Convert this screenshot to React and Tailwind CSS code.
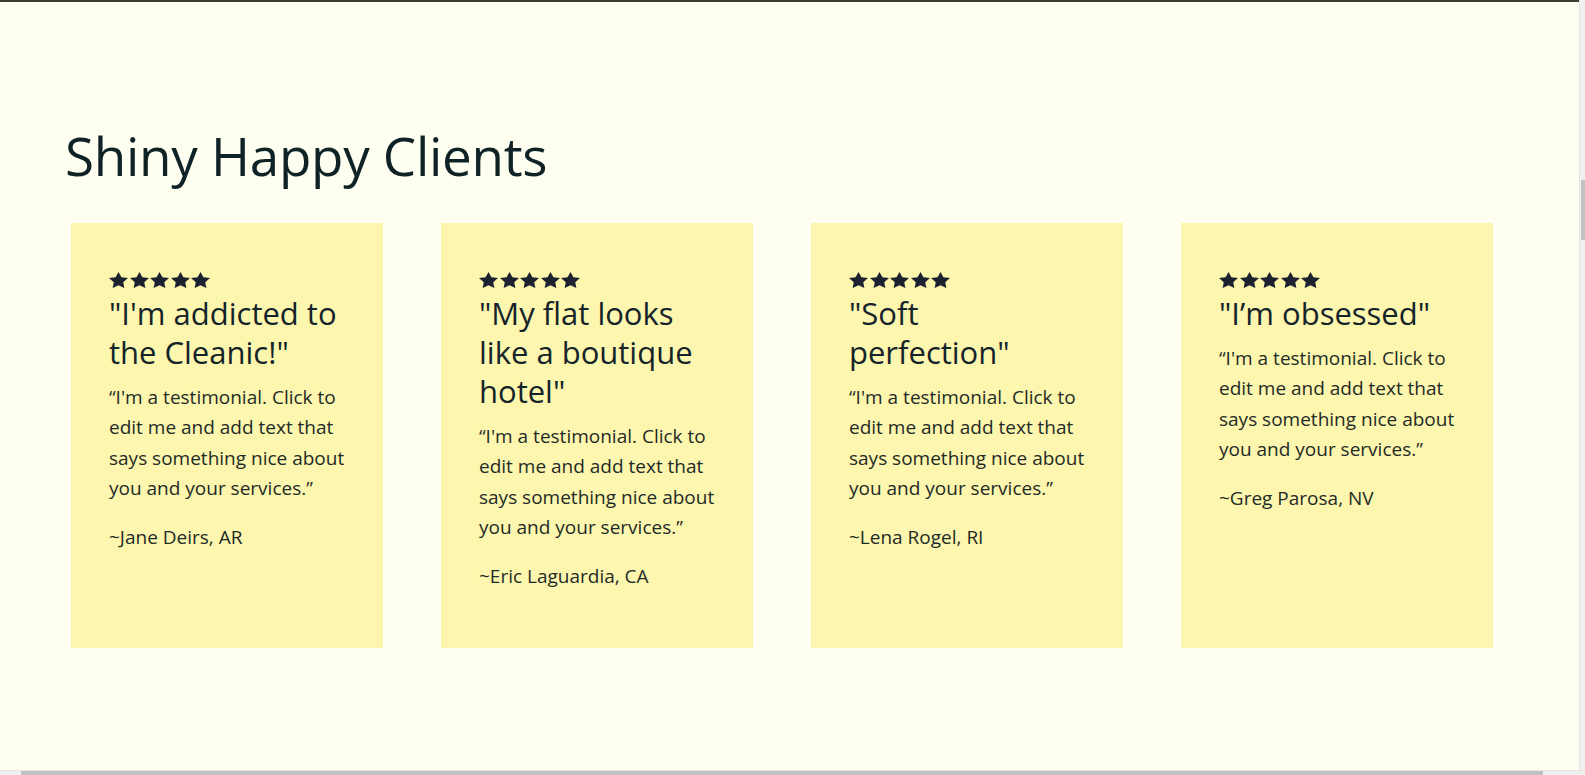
const TESTIMONIALS = [
  { title: ['"I\'m addicted to', 'the Cleanic!"'], author: '~Jane Deirs, AR' },
  { title: ['"My flat looks', 'like a boutique', 'hotel"'], author: '~Eric Laguardia, CA' },
  { title: ['"Soft', 'perfection"'], author: '~Lena Rogel, RI' },
  { title: ['"I’m obsessed"'], author: '~Greg Parosa, NV' },
]

const BODY = [
  '“I\'m a testimonial. Click to',
  'edit me and add text that',
  'says something nice about',
  'you and your services.”',
]

function Stars() {
  return (
    <div className="flex gap-[1.5px] h-[16px]" aria-label="5 stars">
      {[0, 1, 2, 3, 4].map((i) => (
        <svg key={i} width="19" height="16" viewBox="2 2 20 19" preserveAspectRatio="none">
          <polygon
            fill="#1d2230"
            points="12,2 15.09,8.26 22,9.27 17,14.14 18.18,21.02 12,17.77 5.82,21.02 7,14.14 2,9.27 8.91,8.26"
          />
        </svg>
      ))}
    </div>
  )
}

function Card({ title, author }) {
  return (
    <div className="w-[312px] h-[425px] shrink-0 bg-[#fdf6ae] pl-[38px] pr-[20px] pt-[49px]">
      <Stars />
      <h3 className="mt-[6px] text-[31px] leading-[39px] text-[#14242a] whitespace-nowrap">
        {title.map((line, i) => (
          <span key={i} className="block">{line}</span>
        ))}
      </h3>
      <p className="mt-[10px] text-[19px] leading-[30.3px] text-[#1f2b27] whitespace-nowrap">
        {BODY.map((line, i) => (
          <span key={i} className="block">{line}</span>
        ))}
      </p>
      <p className="mt-[19px] text-[19px] leading-[30.3px] text-[#1f2b27]">{author}</p>
    </div>
  )
}

export default function App() {
  return (
    <div
      className="h-screen w-full flex flex-col bg-[#fefff0] overflow-hidden"
      style={{ fontFamily: '"Open Sans", "Noto Sans", sans-serif' }}
    >
      <div className="flex flex-1 min-h-0">
        {/* page */}
        <div className="flex-1 flex flex-col border-t-[2px] border-[#3a3c2e]">
          <h2 className="mt-[126px] ml-[65px] text-[53px] leading-[56px] text-[#0f2327] tracking-[-0.3px]">
            Shiny Happy Clients
          </h2>
          <div className="mt-[39px] ml-[71px] flex gap-[58px]">
            {TESTIMONIALS.map((t, i) => (
              <Card key={i} {...t} />
            ))}
          </div>
        </div>

        {/* vertical scrollbar */}
        <div className="w-[6px] bg-[#f0f0f0] border-l border-[#e4e4e4] flex flex-col">
          <div className="mt-[180px] h-[60px] w-[4px] ml-auto bg-[#c1c1c1]" />
        </div>
      </div>

      {/* horizontal scrollbar */}
      <div className="h-[5px] flex bg-[#efefef] border-t border-[#e6e6e6]">
        <div className="w-[21px]" />
        <div className="w-[1522px] bg-[#c1c1c1]" />
      </div>
    </div>
  )
}
